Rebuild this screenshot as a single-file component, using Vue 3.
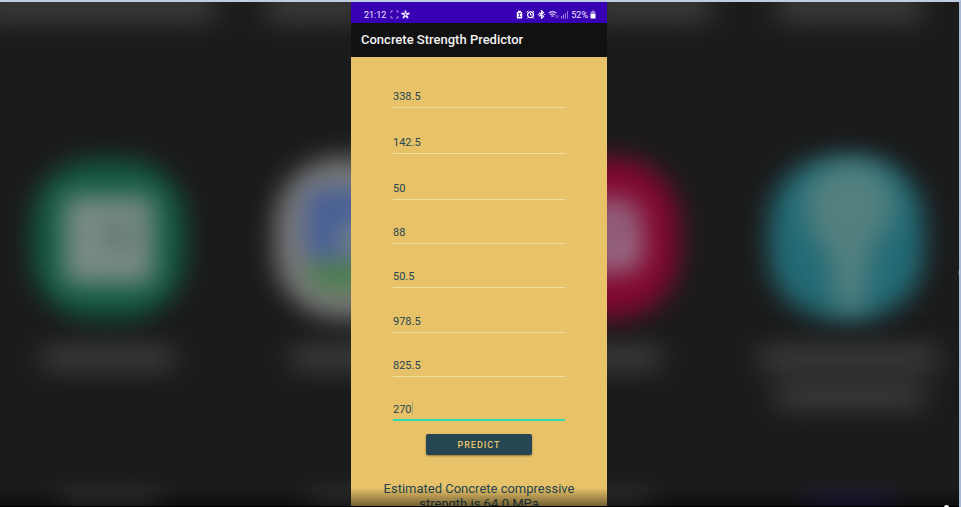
<script setup>
import { ref } from 'vue'

const fields = ref([
  { id: 'cement', label: 'Cement', value: '338.5' },
  { id: 'slag', label: 'Blast furnace slag', value: '142.5' },
  { id: 'ash', label: 'Fly ash', value: '50' },
  { id: 'water', label: 'Water', value: '88' },
  { id: 'plasticizer', label: 'Superplasticizer', value: '50.5' },
  { id: 'coarse', label: 'Coarse aggregate', value: '978.5' },
  { id: 'fine', label: 'Fine aggregate', value: '825.5' },
  { id: 'age', label: 'Age', value: '270' },
])
const active = ref('age')
const strength = ref('64.0')
</script>

<template>
  <div class="player">
    <svg class="backdrop" viewBox="0 0 959 505" preserveAspectRatio="xMidYMid slice" aria-hidden="true">
      <defs>
        <filter id="soft" x="-40%" y="-40%" width="180%" height="180%" color-interpolation-filters="sRGB">
          <feGaussianBlur stdDeviation="13" />
        </filter>
        <filter id="text-soft" x="-10%" y="-20%" width="120%" height="140%" color-interpolation-filters="sRGB">
          <feGaussianBlur stdDeviation="14 11" />
        </filter>
      </defs>
      <g filter="url(#text-soft)" fill="#373737">
        <rect x="-20" y="-16" width="235" height="39" />
        <rect x="267" y="-16" width="100" height="39" />
        <rect x="590" y="-16" width="121" height="39" />
        <rect x="777" y="-16" width="144" height="39" />
        <rect x="43" y="341" width="130" height="30" />
        <rect x="292" y="341" width="100" height="30" />
        <rect x="570" y="341" width="90" height="30" />
        <rect x="760" y="341" width="178" height="30" />
        <rect x="776" y="379" width="148" height="30" />
        <rect x="61" y="491" width="96" height="30" />
        <rect x="310" y="491" width="80" height="30" />
        <rect x="570" y="491" width="80" height="30" />
        <rect x="805" y="494" width="90" height="24" fill="#251c48" />
      </g>
      <g filter="url(#soft)">
        <rect x="32" y="158" width="153" height="158" rx="62" fill="#145b42" />
        <rect x="275" y="156" width="160" height="160" rx="66" fill="#7b7b7b" />
        <rect x="525" y="156" width="154" height="160" rx="64" fill="#820831" />
        <rect x="769" y="156" width="155" height="160" rx="64" fill="#236b76" />
      </g>
      <g filter="url(#soft)">
        <rect x="64" y="194" width="90" height="88" rx="5" fill="#7b8c86" />
        <ellipse cx="118" cy="234" rx="18" ry="14" fill="#5e766e" />
        <path d="M306 187h70v70h-70z" fill="#455f98" />
        <path d="M304 262h70v25h-53q-12-5-17-25z" fill="#448044" />
        <circle cx="356" cy="235" r="17" fill="#7d8687" />
        <path d="M580 197h46q16 5 16 22v34q0 16-16 18h-46z" fill="#95647d" />
        <circle cx="610" cy="233" r="10" fill="#7c3e5c" />
        <circle cx="630" cy="248" r="12" fill="#a07b90" />
        <path d="M806 190q14-29 44-29t43 27q7 29-17 51-8 10-8 30l-4 40h-28l-4-39q0-13-11-27-20-27-15-53z" fill="#54807f" />
      </g>
    </svg>

    <main class="phone">
      <div class="status">
        <span class="clock">21:12</span>
        <svg class="capture" viewBox="0 0 9 9" aria-hidden="true">
          <path d="M1 3V1h2M6 1h2v2M1 6v2h2M6 8h2V6" />
        </svg>
        <svg class="glyph" viewBox="0 0 9 9" aria-hidden="true">
          <path d="M4.5 4.5V1.200M4.500 4.500 1.200 3.500M4.500 4.500 7.800 3.500M4.500 4.500 2.500 7.600M4.500 4.500 6.500 7.600" stroke="#e8e0ff" stroke-width="1.900" stroke-linecap="round" />
          <circle cx="4.5" cy="4.5" r="1" fill="#5a30c2" />
        </svg>
        <span class="spacer"></span>
        <svg class="glyph" viewBox="0 0 9 9" aria-hidden="true">
          <path d="M3 2V.7h3V2h1.2v6.5H1.8V2z" fill="#fff" />
          <path d="M3 3.3h3M3.2 6.5h2.6M4.5 4v2" stroke="#3700b3" stroke-width=".8" />
        </svg>
        <svg class="glyph" viewBox="0 0 9 9" aria-hidden="true">
          <circle cx="4.5" cy="4.8" r="2.9" fill="none" stroke="#fff" stroke-width="1.3" />
          <path d="M.7 2.2 2.4.8M8.3 2.2 6.6.8M4.5 3v2H6M2 7.5 1.2 8.5M7 7.5l.8 1" stroke="#fff" stroke-width="1" fill="none" />
        </svg>
        <svg class="glyph" viewBox="0 0 9 9" aria-hidden="true">
          <path d="M2 2.7 6.5 6.3 4.5 8.3V.7l2 2L2 6.3" fill="none" stroke="#fff" stroke-width="1.2" />
          <path d="M.8 4.5h1M7.2 4.5h1" stroke="#fff" stroke-width="1" />
        </svg>
        <svg class="wifi" viewBox="0 0 11 9" aria-hidden="true">
          <path d="M.7 3.2Q4.5-.2 8.3 3.2M2.2 4.9Q4.5 3 6.8 4.9M3.5 6.5q1-1 2 0" fill="none" stroke="#c5b3ee" stroke-width="1.3" />
          <path d="M8 5v3M10 5v3" stroke="#8a68d8" stroke-width="1" />
        </svg>
        <svg class="signal" viewBox="0 0 8 9" aria-hidden="true">
          <path d="M.5 6v2.5M2.5 4.5v4" stroke="#b49be8" />
          <path d="M4.5 3v5.5M6.5 1v7.5" stroke="#9275dc" />
        </svg>
        <span class="charge">52%</span>
        <svg class="battery" viewBox="0 0 6 9" aria-hidden="true">
          <path d="M2 .5h2v1h1.500V4h-5V1.500H2z" fill="#9c83dd" />
          <path d="M.5 4h5v4.500h-5z" fill="#fff" />
        </svg>
      </div>

      <header class="appbar">
        <h1>Concrete Strength Predictor</h1>
      </header>

      <form class="form" @submit.prevent>
        <label v-for="field in fields" :key="field.id" class="field" :class="{ active: field.id === active }">
          <input
            :id="field.id"
            v-model="field.value"
            type="text"
            inputmode="decimal"
            autocomplete="off"
            :aria-label="field.label"
            @focus="active = field.id"
          />
          <span v-if="field.id === active" class="caret"></span>
        </label>
        <button type="submit">PREDICT</button>
        <output class="result">Estimated Concrete compressive strength is {{ strength }} MPa</output>
      </form>
    </main>

    <div class="shade"></div>
    <span class="seek-knob"></span>
    <span class="edge-handle"></span>
  </div>
</template>

<style>
body {
  margin: 0;
  background: #1b1b1b;
}
</style>

<style scoped>
.player {
  position: relative;
  box-sizing: border-box;
  height: 100vh;
  overflow: hidden;
  padding-right: 1px;
  border-top: 2px solid #bfcce2;
  border-right: 2px solid #a9b9d2;
  background: #1b1b1b;
  font-family: Roboto, "Liberation Sans", sans-serif;
}
.backdrop {
  position: absolute;
  inset: 0;
  width: 100%;
  height: 100%;
}
.phone {
  position: relative;
  display: flex;
  flex-direction: column;
  width: 256px;
  min-height: 100%;
  margin: 0 auto;
  background: #e7c268;
}
.status {
  display: flex;
  align-items: center;
  gap: 2px;
  height: 21px;
  padding: 4px 11px 0 13px;
  box-sizing: border-box;
  background: #3700b3;
  color: #f1ebff;
  font-size: 9px;
  line-height: 12px;
}
.spacer {
  flex: 1;
}
.clock {
  margin-right: 2px;
}
.capture {
  width: 9px;
  height: 9px;
  fill: none;
  stroke: #a990e2;
  stroke-width: 1;
}
.glyph {
  width: 9px;
  height: 9px;
}
.wifi {
  width: 11px;
  height: 9px;
}
.signal {
  width: 8px;
  height: 9px;
}
.battery {
  width: 6px;
  height: 9px;
}
.appbar {
  display: flex;
  align-items: center;
  height: 34px;
  padding: 0 10px;
  background: #111;
}
.appbar h1 {
  margin: 0;
  color: #f2f2f2;
  font-size: 13px;
  font-weight: 500;
  line-height: 16px;
}
.form {
  display: flex;
  flex-direction: column;
  padding: 7px 32px 0;
}
.field {
  position: relative;
  display: flex;
  align-items: flex-end;
  box-sizing: border-box;
  height: 44px;
  margin: 0 10px;
  font-size: 11px;
}
.field:nth-child(2),
.field:nth-child(3) {
  height: 46px;
}
.field:nth-child(6) {
  height: 45px;
}
.field input {
  box-sizing: border-box;
  width: 100%;
  height: 20px;
  padding: 0 0 2px;
  border: 0;
  border-bottom: 1px solid #f3dea3;
  border-radius: 0;
  outline: 0;
  background: transparent;
  color: #264653;
  font: inherit;
}
.field.active input {
  border-bottom: 2px solid #2fdcae;
  caret-color: transparent;
}
.caret {
  position: absolute;
  bottom: 6px;
  left: 3ch;
  width: 1px;
  height: 13px;
  background: #a9a56f;
}
button {
  align-self: center;
  width: 106px;
  height: 21px;
  margin-top: 13px;
  padding: 0;
  border: 0;
  border-radius: 2px;
  background: #264653;
  box-shadow: 0 1px 2px rgba(60, 45, 10, 0.5);
  color: #e9c46a;
  font-family: inherit;
  font-size: 9px;
  font-weight: 500;
  letter-spacing: 1px;
}
.result {
  display: block;
  margin-top: 26px;
  color: #264653;
  font-size: 13px;
  line-height: 15px;
  text-align: center;
}
.shade {
  position: absolute;
  right: 0;
  bottom: 0;
  left: 0;
  height: 18px;
  border-bottom: 1px solid #000;
  background: linear-gradient(rgba(0, 0, 0, 0), rgba(0, 0, 0, 0.5));
  pointer-events: none;
}
.seek-knob {
  position: absolute;
  right: 10px;
  bottom: -3px;
  width: 5px;
  height: 5px;
  border-radius: 50%;
  background: #fff;
}
.edge-handle {
  position: absolute;
  top: 268px;
  right: -4px;
  box-sizing: border-box;
  width: 5px;
  height: 5px;
  border: 1px solid #444;
  background: #fff;
}
</style>
